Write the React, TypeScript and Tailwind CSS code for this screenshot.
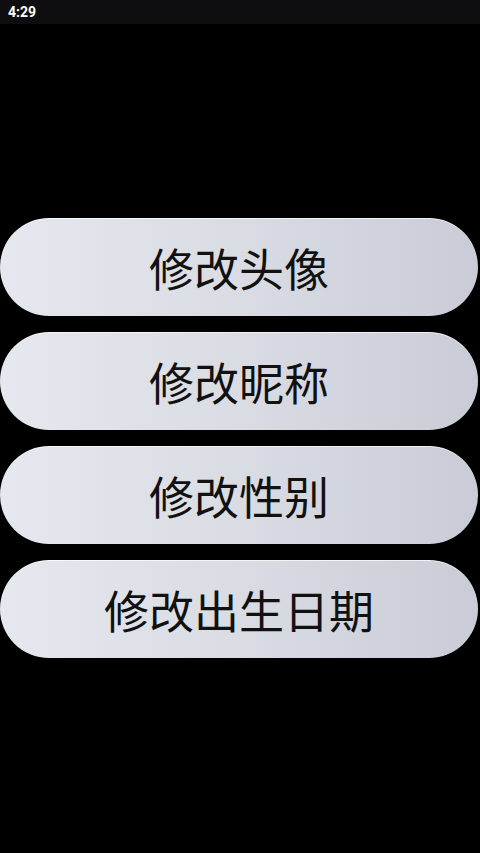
const items = ["修改头像", "修改昵称", "修改性别", "修改出生日期"]

export default function App() {
  return (
    <div
      className="w-[480px] h-[853px] bg-black flex flex-col"
      style={{ fontFamily: '"Noto Sans CJK SC", "Noto Sans", sans-serif' }}
    >
      {/* status bar */}
      <div className="h-6 bg-[#0e0e11] flex items-center px-2">
        <span
          className="text-white text-[14px] font-bold"
          style={{ fontFamily: 'Roboto, "Liberation Sans", sans-serif' }}
        >
          4:29
        </span>
      </div>

      <div className="flex flex-col gap-4 mt-[194px] pl-0 pr-[2px]">
        {items.map((label) => (
          <button
            key={label}
            className="h-[98px] w-full rounded-full bg-gradient-to-r from-[#e6e8ef] via-[#dadce4] to-[#c9ccd6] border-t border-white/70 flex items-center justify-center text-[45px] leading-none text-[#111]"
          >
            {label}
          </button>
        ))}
      </div>
    </div>
  )
}
